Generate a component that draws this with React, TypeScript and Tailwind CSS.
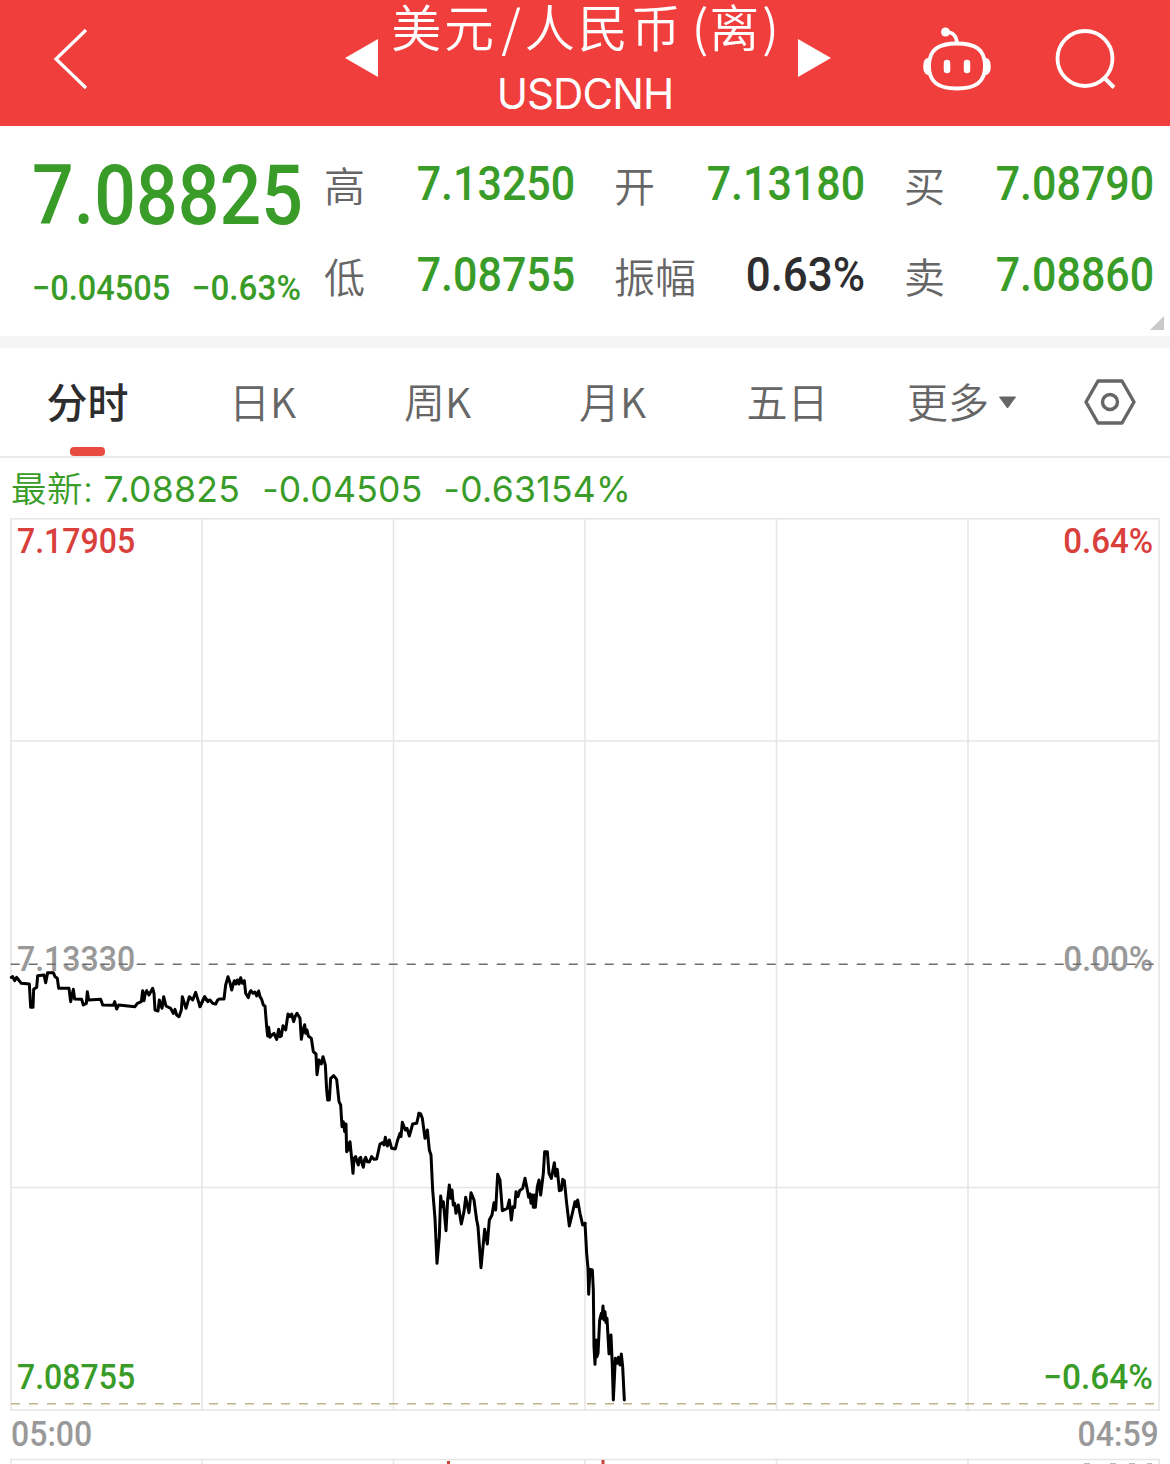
import React from 'react';
import clsx from 'clsx';

const CJK = "font-['Noto_Sans_CJK_SC',sans-serif]";

// 1/3px plotting units, one entry per stretch of the session
const segments = [
  {
    x: 0,
    y: 930,
    points:
      '34,142 38,140 44,152 50,142 56,150 64,160 88,162 92,232 99,232 101,178 110,172 113,137 132,135 137,158 143,128 160,128 165,140 172,145 176,175 207,175 212,215 220,178 224,207 245,208 250,225 259,220 262,185 266,210 302,208 308,225 340,226 344,215 350,237 356,225 405,230 412,220 424,215 428,182 432,212 436,190 440,182 447,195 458,175 462,190 465,240 474,243 478,210 486,235 491,200 498,228 512,235 520,250 525,238 530,255 537,260 544,240 547,200 558,235 568,200 578,210 587,187 600,230 613,202 624,215',
  },
  {
    x: 200,
    y: 950,
    points:
      '0,170 14,140 22,152 30,150 38,160 47,162 53,150 58,147 72,147 77,105 84,80 90,98 95,120 99,105 103,92 108,102 112,90 117,102 122,83 127,100 133,92 137,130 145,143 149,128 153,122 159,130 165,126 170,138 176,123 180,140 185,148 190,165 195,168 200,230 203,258 206,232 210,262 216,255 222,250 230,268 236,238 240,260 244,258 249,227 257,240 264,192 270,200 275,192 281,215 286,198 291,190 300,205 304,268 309,240 314,224 317,250 321,240 325,258 334,265 340,305 348,312 351,374 357,330 364,342 369,320 376,345 380,420 383,450 388,450 392,385 401,377 410,388 417,455 422,465 426,530 430,515 434,545 438,522 440,605 444,580 447,600 450,575 455,625 459,670 462,625 467,620 471,635 475,645 479,625 482,622 486,640 490,652 494,628 497,622 502,635 508,636 515,620 522,628 530,627 540,582 548,578 552,585 556,562 562,588 568,570 575,595 586,597 593,570 600,550 603,560 607,517 616,540 621,535 628,558 638,522 650,520 657,490',
  },
  {
    x: 400,
    y: 1090,
    points:
      '57,70 62,72 67,85 75,145 82,120 88,180 93,195 98,300 105,385 111,520 118,440 122,318 126,350 130,335 138,422 143,330 148,285 152,325 156,300 160,345 164,340 168,370 175,345 180,378 184,402 192,365 197,322 207,368 213,308 222,330 230,390 234,410 243,533 254,418 262,462 268,390 276,375 282,338 287,360 293,253 300,270 307,362 322,355 328,330 334,390 339,350 344,352 348,305 354,320 359,302 368,295 375,265 382,300 386,322 390,312 393,340 397,315 400,352 403,315 406,352 412,290 417,270 422,315 430,250 434,185 442,185 447,250 454,265 458,245 463,218 467,258 472,238 478,302 484,300 488,268 493,272 500,340 508,408 517,370 525,335 529,350 533,330 540,370 548,405 555,400',
  },
  {
    x: 560,
    y: 1180,
    points:
      '75,130 80,220 84,265 86,343 90,268 97,270 100,330 102,500 105,553 108,480 111,530 114,520 119,420 124,400 126,415 129,378 132,420 135,395 138,428 141,415 147,522 150,480 153,465 157,560 160,660 166,535 171,550 175,532 180,555 184,522 188,560 193,660',
  },
];

const quotes = [
  { label: '高', value: '7.13250' },
  { label: '开', value: '7.13180' },
  { label: '买', value: '7.08790' },
  { label: '低', value: '7.08755' },
  { label: '振幅', value: '0.63%', dark: true },
  { label: '卖', value: '7.08860' },
];

const tabs = ['分时', '日K', '周K', '月K', '五日'];

function Header() {
  return (
    <header className="relative flex h-[126px] items-center justify-center bg-[#f03e3d] text-white">
      <svg className="absolute left-[50px] top-[26px]" width="42" height="66" viewBox="0 0 42 66" fill="none">
        <path d="M36 4 L6 33 L36 62" stroke="currentColor" strokeWidth="3.2" />
      </svg>
      <svg className="absolute left-[345px] top-[39px]" width="33" height="38" viewBox="0 0 33 38">
        <path d="M0 19 L33 0 V38 Z" fill="currentColor" />
      </svg>
      <div className="flex h-full flex-col items-center">
        <div className={clsx(CJK, 'flex h-[50px] items-center whitespace-nowrap text-[50px] font-[350] leading-[50px]')}>
          <span className="tracking-[3px]">美元</span>
          <span className="mx-[4px]">/</span>
          <span className="tracking-[3px]">人民币</span>
          <span className="ml-[8px]">(</span>
          <span className="mx-[1px]">离</span>
          <span className="ml-[2px]">)</span>
        </div>
        <div className="mt-[19px] font-['Inter',sans-serif] text-[42px] leading-[50px] tracking-[-0.9px]">USDCNH</div>
      </div>
      <svg className="absolute left-[798px] top-[39px]" width="33" height="38" viewBox="0 0 33 38">
        <path d="M33 19 L0 0 V38 Z" fill="currentColor" />
      </svg>
      <svg className="absolute left-[920px] top-[24px]" width="74" height="70" viewBox="920 24 74 70" fill="none">
        <path
          d="M957 43.500 C975 43.500 985 49 985 66 C985 82 976 88.500 957 88.500 C938 88.500 929 82 929 66 C929 49 939 43.500 957 43.500 Z"
          stroke="currentColor"
          strokeWidth="3.8"
        />
        <path d="M928 59 C923 60 923 73 928 74 Z M986 59 C991 60 991 73 986 74 Z" fill="currentColor" stroke="currentColor" strokeWidth="2" />
        <circle cx="945.500" cy="32" r="4.500" fill="currentColor" />
        <path d="M946 32 C953 32 956.500 36 957 43" stroke="currentColor" strokeWidth="3.600" />
        <path d="M947 63 V70 M967 63 V70" stroke="currentColor" strokeWidth="6.500" strokeLinecap="round" />
      </svg>
      <svg className="absolute left-[1052px] top-[26px]" width="66" height="66" viewBox="1052 26 66 66" fill="none">
        <circle cx="1085" cy="58.500" r="27.500" stroke="currentColor" strokeWidth="3.800" />
        <path d="M1103.500 77 L1114 87.500" stroke="currentColor" strokeWidth="4" />
      </svg>
    </header>
  );
}

function Quote() {
  return (
    <section className="relative flex h-[210px] font-['Roboto',sans-serif] font-medium text-[#3a9c28]">
      <div className="w-[325px] shrink-0 pl-[32px]">
        <div className="mt-[22px] h-[94px] w-[310px] origin-left scale-x-[.885] whitespace-nowrap text-[83px] leading-[96px]">7.08825</div>
        <div className="mt-[24px] flex h-[44px] w-[269px] justify-between whitespace-nowrap text-[35px] leading-[46px]">
          <span className="origin-left scale-x-[.93]">−0.04505</span>
          <span className="origin-right scale-x-[.95]">−0.63%</span>
        </div>
      </div>
      <div className="grid grid-cols-[250px_250px_249px] grid-rows-[91px_91px] gap-x-[40px] pt-[12px]">
        {quotes.map((q) => (
          <div key={q.label} className="flex items-center justify-between">
            <span className={clsx(CJK, '-ml-px text-[41px] font-[350] leading-[60px] text-[#666]')}>{q.label}</span>
            <span className={clsx('origin-right text-[47.5px] leading-[60px]', q.dark ? 'scale-x-[.925] text-[#2d2d30]' : 'scale-x-[.905]')}>
              {q.value}
            </span>
          </div>
        ))}
      </div>
      <svg className="absolute right-[6px] top-[190px]" width="14" height="14" viewBox="0 0 14 14">
        <path d="M14 0 V14 H0 Z" fill="#c9c9c9" />
      </svg>
    </section>
  );
}

function Tabs() {
  return (
    <nav className={clsx(CJK, 'flex h-[110px] border-b-2 border-[#ebebeb] text-[41px] font-[350] text-[#666]')}>
      {tabs.map((tab, i) => (
        <div key={tab} className={clsx('relative flex w-[175px] justify-center pt-[22px] leading-[60px]', i === 0 && 'font-medium text-[#2d2d2d]')}>
          {tab}
          {i === 0 && <span className="absolute left-[70px] top-[99px] h-[9px] w-[35px] rounded-[4px] bg-[#e84c40]" />}
        </div>
      ))}
      <div className="flex w-[175px] pl-[32px] pt-[22px] leading-[60px]">
        更多
        <svg className="ml-[9px] mt-[26px]" width="19" height="13" viewBox="0 0 19 13">
          <path d="M1.500 1 H17.500 L9.500 12 Z" fill="#666" stroke="#666" strokeLinejoin="round" />
        </svg>
      </div>
      <svg className="ml-[33px] mt-[29px]" width="54" height="50" viewBox="0 0 54 50" fill="none" stroke="#666" strokeWidth="3.4" strokeLinejoin="round">
        <path d="M15 4 H39 L51 25 L39 46 H15 L3 25 Z" />
        <circle cx="27" cy="25" r="7.500" />
      </svg>
    </nav>
  );
}

function Chart() {
  return (
    <section className="relative h-[946px] font-['Roboto',sans-serif] text-[35px] font-medium leading-[40px]">
      <svg className="block" width="1170" height="946" viewBox="0 518 1170 946" fill="none">
        <g stroke="#e6e6e6" strokeWidth="1.6">
          <path d="M10 518.800 H1160 M10 741 H1160 M10 1187.500 H1160 M10 1410 H1160 M10 1459.500 H1160" />
          <path d="M11 518 V1411 M202 518 V1411 M393.500 518 V1411 M585 518 V1411 M776.500 518 V1411 M968 518 V1411 M1159 518 V1411" />
          <path d="M11 1459 V1464 M202 1459 V1464 M393.500 1459 V1464 M585 1459 V1464 M776.500 1459 V1464 M968 1459 V1464 M1159 1459 V1464" />
        </g>
        <path d="M11 1403.700 H1155" stroke="#bdb48c" strokeWidth="1.600" strokeDasharray="9 9" />
        <path d="M448.500 1461 V1464 M603 1460 V1464" stroke="#c8443a" strokeWidth="3" />
        <path d="M1084 1463.500 H1090 M1110 1463.500 H1116 M1129 1463.500 H1135 M1147 1463.500 H1152" stroke="#bbb" />
      </svg>
      <span className="absolute left-[17px] top-[4px] origin-left scale-x-[.915] text-[#d9403c]">7.17905</span>
      <span className="absolute right-[17px] top-[4px] origin-right scale-x-[.945] text-[#d9403c]">0.64%</span>
      <span className="absolute left-[17px] top-[422px] origin-left scale-x-[.915] text-[#999]">7.13330</span>
      <span className="absolute right-[17px] top-[422px] origin-right scale-x-[.945] text-[#999]">0.00%</span>
      <span className="absolute left-[17px] top-[840px] origin-left scale-x-[.915] text-[#3a9c28]">7.08755</span>
      <span className="absolute right-[17px] top-[840px] origin-right scale-x-[.955] text-[#3a9c28]">−0.64%</span>
      <span className="absolute left-[11px] top-[897px] origin-left scale-x-[.915] text-[#999]">05:00</span>
      <span className="absolute right-[11px] top-[897px] origin-right scale-x-[.915] text-[#999]">04:59</span>
      <svg className="absolute left-0 top-0" width="1170" height="946" viewBox="0 518 1170 946" fill="none">
        <path d="M10.700 964.300 H1155" stroke="#6e6e6e" strokeWidth="1.500" strokeDasharray="9 9" />
        {segments.map((s) => (
          <g key={s.x} transform={`translate(${s.x} ${s.y}) scale(0.33333)`}>
            <polyline points={s.points} stroke="#000" strokeWidth="9" strokeLinejoin="round" strokeLinecap="round" />
          </g>
        ))}
      </svg>
    </section>
  );
}

export default function App() {
  return (
    <main className="h-[1464px] w-[1170px] overflow-hidden bg-white">
      <Header />
      <Quote />
      <div className="h-[12px] bg-[#f5f5f5]" />
      <Tabs />
      <div className="flex h-[60px] whitespace-pre pl-[11px] font-['Inter','Noto_Sans_CJK_SC',sans-serif] text-[35.5px] leading-[63px] text-[#3a9c28]">
        <span className="font-[350] tracking-[0.5px]">最新:</span>
        <span className="ml-[10px] tracking-[0.3px]">7.08825</span>
        <span className="ml-[22px] tracking-[0.3px]">-0.04505</span>
        <span className="ml-[21px] tracking-[0.3px]">-0.63154%</span>
      </div>
      <Chart />
    </main>
  );
}
